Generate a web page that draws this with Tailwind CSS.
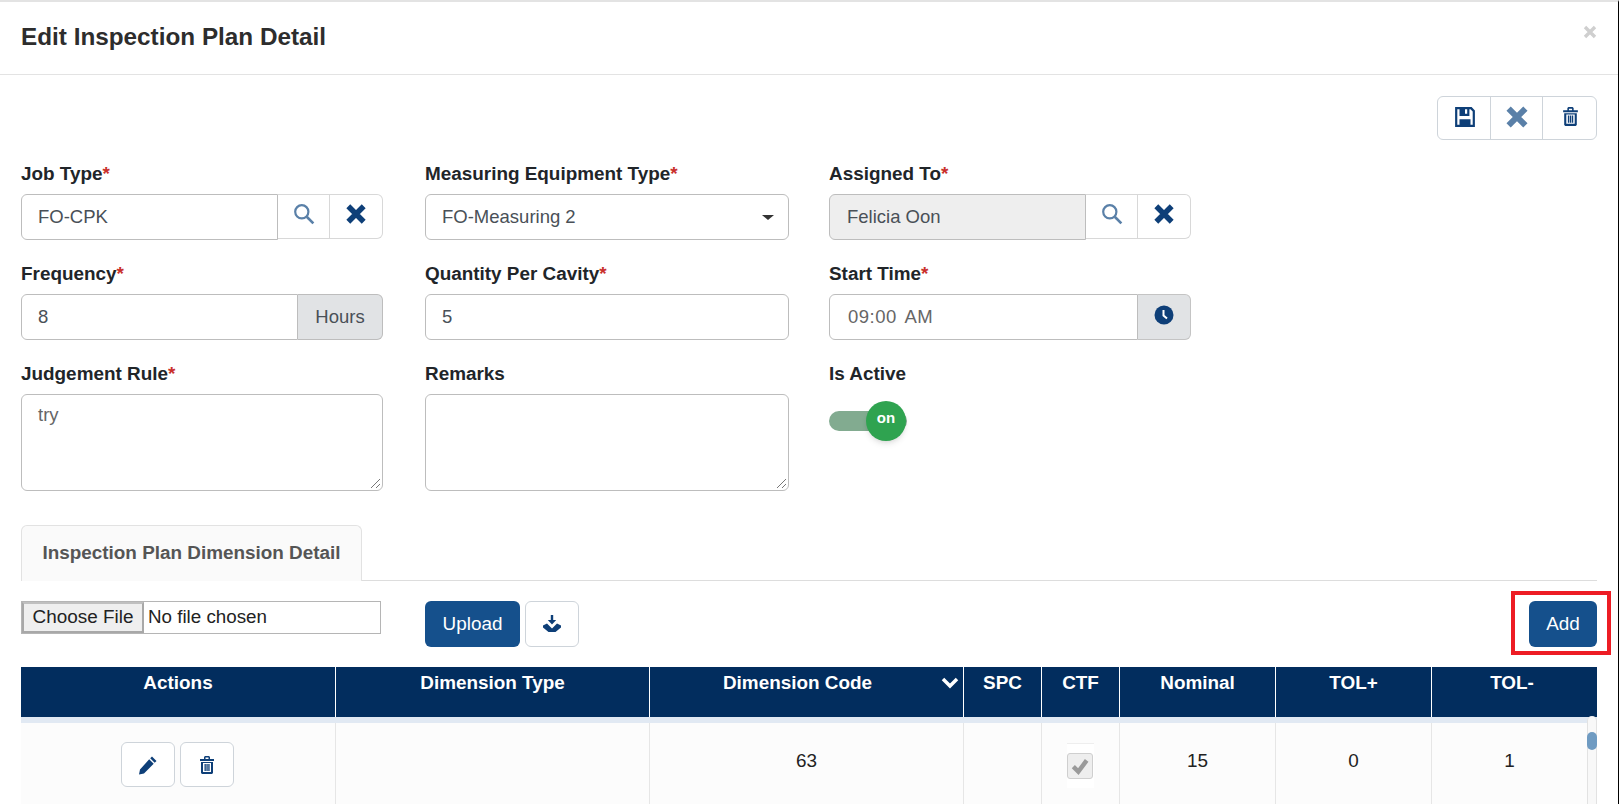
<!DOCTYPE html>
<html lang="en">
  <head>
    <meta charset="UTF-8" />
    <meta name="viewport" content="width=device-width, initial-scale=1.0" />
    <script src="https://cdn.jsdelivr.net/npm/@tailwindcss/browser@4"></script>
    <title>Edit Inspection Plan Detail</title>
  </head>
  <body class="bg-white">
    <div class="h-[804px] w-[1619px] overflow-hidden border-t-2 border-r border-t-[#e3e3e3] border-r-black font-['Liberation_Sans',Arial,sans-serif] text-[18.900px] text-[#212529]">
      <!-- Modal header -->
      <div class="h-[73px] flex items-center justify-between pl-[21px] pr-[21px] border-b border-[#e3e3e3]">
        <h1 class="mb-[2px] text-[24.300px] font-bold text-[#2d2d2d]">Edit Inspection Plan Detail</h1>
        <svg class="mb-[12px] w-[14px] h-[14px]" viewBox="0 0 14 14"><path d="M2 2l10 10M12 2L2 12" stroke="#cfcfcf" stroke-width="3.4"/></svg>
      </div>

      <!-- Toolbar -->
      <div class="flex justify-end pr-[21px] pt-[21px]">
        <div class="flex h-[44px] border border-[#ced4da] rounded-md">
          <button class="w-[53px] pl-[2px] flex items-center justify-center border-r border-[#ced4da]">
            <svg class="mb-[3px] w-[22px] h-[22px]" viewBox="0 0 20 20"><path fill-rule="evenodd" fill="#0e3f78" d="M1 1h15l3 3v15H1zM3 3v14h14V5l-2-2h-1v6H5V3zM10 3v4h2V3zM5 12h10v5H5z"/></svg>
          </button>
          <button class="w-[52px] pl-[1px] flex items-center justify-center border-r border-[#ced4da]">
            <svg class="mb-[3px] w-[24px] h-[24px]" viewBox="0 0 20 20"><path d="M3 3l14 14M17 3L3 17" stroke="#5a80a8" stroke-width="5"/></svg>
          </button>
          <button class="w-[53px] pl-[1px] flex items-center justify-center">
            <svg class="mb-[3px] w-[17px] h-[21px]" viewBox="0 0 16 20"><path fill="#0e3f78" fill-rule="evenodd" d="M1 4h14v2H1zM5 4V2l1-1h4l1 1v2H9.500V2.500h-3V4zM2 7h12v11l-1 1H3l-1-1zM4 8v9h8V8zM5.500 9h1.300v7H5.500zM7.400 9h1.300v7H7.400zM9.300 9h1.300v7H9.300z"/></svg>
          </button>
        </div>
      </div>

      <!-- Form -->
      <div class="pl-[21px] mt-[22px] grid grid-cols-[362px_404px_362px] gap-x-0 w-[1170px]">
        <div class="h-[100px]">
          <label class="block h-[32px] font-bold leading-[24px]">Job Type<span class="text-[#c9302c]">*</span></label>
          <div class="flex h-[46px]">
            <div class="w-[257px] h-[46px] flex items-center pl-[16px] border border-[#bdbdbd] rounded-l-md text-[18.500px] text-[#495057]">FO-CPK</div>
            <div class="w-[105px] h-[45px] flex border border-l-0 border-[#d8d8d8] rounded-r-md">
              <div class="w-[52px] flex items-center justify-center border-r border-[#d8d8d8]">
                <svg class="mb-[6px] w-[22px] h-[22px]" viewBox="0 0 20 20"><circle cx="8" cy="8" r="6" fill="none" stroke="#5a80a8" stroke-width="2"/><path d="M12.500 12.500l6 6" stroke="#5a80a8" stroke-width="2.400"/></svg>
              </div>
              <div class="flex-1 flex items-center justify-center">
                <svg class="mb-[6px] w-[22px] h-[22px]" viewBox="0 0 20 20"><path d="M3 3l14 14M17 3L3 17" stroke="#0e3f78" stroke-width="5"/></svg>
              </div>
            </div>
          </div>
        </div>
        <div class="h-[100px] pl-[42px]">
          <label class="block h-[32px] font-bold leading-[24px]">Measuring Equipment Type<span class="text-[#c9302c]">*</span></label>
          <div class="w-[364px] h-[46px] flex items-center justify-between pl-[16px] pr-[14px] border border-[#bdbdbd] rounded-md text-[18.500px] text-[#495057]">
            FO-Measuring 2
            <span class="w-0 h-0 border-x-[6px] border-x-transparent border-t-[5px] border-t-[#333]"></span>
          </div>
        </div>
        <div class="h-[100px] pl-[42px]">
          <label class="block h-[32px] font-bold leading-[24px]">Assigned To<span class="text-[#c9302c]">*</span></label>
          <div class="flex h-[46px] w-[362px]">
            <div class="w-[257px] h-[46px] flex items-center pl-[17px] border border-[#bdbdbd] rounded-l-md bg-[#eeeeee] text-[18.500px] text-[#495057]">Felicia Oon</div>
            <div class="w-[105px] h-[45px] flex border border-l-0 border-[#d8d8d8] rounded-r-md">
              <div class="w-[52px] flex items-center justify-center border-r border-[#d8d8d8]">
                <svg class="mb-[6px] w-[22px] h-[22px]" viewBox="0 0 20 20"><circle cx="8" cy="8" r="6" fill="none" stroke="#5a80a8" stroke-width="2"/><path d="M12.500 12.500l6 6" stroke="#5a80a8" stroke-width="2.400"/></svg>
              </div>
              <div class="flex-1 flex items-center justify-center">
                <svg class="mb-[6px] w-[22px] h-[22px]" viewBox="0 0 20 20"><path d="M3 3l14 14M17 3L3 17" stroke="#0e3f78" stroke-width="5"/></svg>
              </div>
            </div>
          </div>
        </div>

        <div class="h-[100px]">
          <label class="block h-[32px] font-bold leading-[24px]">Frequency<span class="text-[#c9302c]">*</span></label>
          <div class="flex h-[46px]">
            <div class="w-[277px] flex items-center pl-[16px] border border-[#bdbdbd] rounded-l-md text-[18.500px] text-[#495057]">8</div>
            <div class="w-[85px] flex items-center justify-center border border-l-0 border-[#bdbdbd] rounded-r-md bg-[#e1e3e5] text-[18.500px] text-[#495057]">Hours</div>
          </div>
        </div>
        <div class="h-[100px] pl-[42px]">
          <label class="block h-[32px] font-bold leading-[24px]">Quantity Per Cavity<span class="text-[#c9302c]">*</span></label>
          <div class="w-[364px] h-[46px] flex items-center pl-[16px] border border-[#bdbdbd] rounded-md text-[18.500px] text-[#495057]">5</div>
        </div>
        <div class="h-[100px] pl-[42px]">
          <label class="block h-[32px] font-bold leading-[24px]">Start Time<span class="text-[#c9302c]">*</span></label>
          <div class="flex h-[46px] w-[362px]">
            <div class="w-[309px] flex items-center pl-[18px] border border-[#bdbdbd] rounded-l-md text-[18.500px] text-[#666] tracking-[0.5px] [word-spacing:3px]">09:00 AM</div>
            <div class="w-[53px] flex items-center justify-center border border-l-0 border-[#c4c4c4] rounded-r-md bg-[#e1e3e5]">
              <svg class="mb-[4px] w-[20px] h-[20px]" viewBox="0 0 20 20"><circle cx="10" cy="10" r="9.500" fill="#0e3f78"/><path d="M9.500 5v5.500l3.500 3" fill="none" stroke="#fff" stroke-width="2"/></svg>
            </div>
          </div>
        </div>

        <div>
          <label class="block h-[32px] font-bold leading-[24px]">Judgement Rule<span class="text-[#c9302c]">*</span></label>
          <div class="relative w-[362px] h-[97px] pl-[16px] pt-[6px] border border-[#bdbdbd] rounded-md text-[18.500px] text-[#666]">try
            <svg class="absolute right-[1px] bottom-[1px] w-[12px] h-[12px]" viewBox="0 0 12 12"><path d="M11 2L2 11M11 7l-4 4" stroke="#777" stroke-width="1"/></svg>
          </div>
        </div>
        <div class="pl-[42px]">
          <label class="block h-[32px] font-bold leading-[24px]">Remarks</label>
          <div class="relative w-[364px] h-[97px] border border-[#bdbdbd] rounded-md">
            <svg class="absolute right-[1px] bottom-[1px] w-[12px] h-[12px]" viewBox="0 0 12 12"><path d="M11 2L2 11M11 7l-4 4" stroke="#777" stroke-width="1"/></svg>
          </div>
        </div>
        <div class="pl-[42px]">
          <label class="block h-[32px] font-bold leading-[24px]">Is Active</label>
          <div class="relative mt-[17px] w-[78px] h-[20px] rounded-full bg-[#82ab90]">
            <div class="absolute left-[37px] top-[-10px] w-[40px] h-[40px] rounded-full bg-[#2fa350] shadow-md text-white text-[15px] font-bold text-center leading-[34px]">on</div>
          </div>
        </div>
      </div>

      <!-- Tab -->
      <div class="mr-[21px] ml-[21px] mt-[34px] h-[56px] border-b border-[#dddddd] flex">
        <div class="w-[341px] h-[56px] flex items-center justify-center border border-b-0 border-[#e2e2e2] rounded-t-md bg-[#fafafa] font-bold text-[#555]">Inspection Plan Dimension Detail</div>
      </div>

      <!-- Upload row -->
      <div class="relative pl-[21px] pr-[21px] pt-[20px] h-[86px] flex">
        <div class="w-[360px] h-[33px] flex items-center border border-[#b5b5b5] text-[#222]">
          <span class="h-full w-[122px] flex items-center justify-center bg-[#efefef] border-2 border-[#a8a8a8] border-t-[#c0c0c0]">Choose File</span>
          <span class="pl-[4px] text-[18.800px]">No file chosen</span>
        </div>
        <button class="ml-[44px] w-[95px] h-[46px] rounded-md bg-[#15508c] text-white">Upload</button>
        <button class="ml-[5px] w-[54px] h-[46px] rounded-md border border-[#ced4da] flex items-center justify-center">
          <svg class="w-[20px] h-[20px]" viewBox="0 0 20 20"><path fill="#0e3f78" d="M8.800 1h2.400v5h3L10 10.500 5.800 6h3zM1 11.500l4-2 5 5 5-5 4 2v2L13.500 18h-7L1 13.500z"/></svg>
        </button>
        <button class="ml-auto w-[68px] h-[46px] rounded-md bg-[#15508c] text-white">Add</button>
        <!-- red highlight round the Add button -->
        <div class="absolute right-[7px] top-[10px] w-[100px] h-[64px] border-[4px] border-[#ed1c24]"></div>
      </div>

      <!-- Table -->
      <div class="relative mr-[21px] ml-[21px]">
        <div class="grid grid-cols-[315px_314px_314px_78px_78px_156px_156px_165px] h-[50px] bg-[#022d5e] text-white font-bold text-center leading-[32px]">
          <div class="border-r border-white">Actions</div>
          <div class="border-r border-white">Dimension Type</div>
          <div class="relative border-r border-white pr-[18px]">Dimension Code
            <svg class="absolute right-[4px] top-[10px] w-[18px] h-[12px]" viewBox="0 0 18 12"><path d="M2 2l7 7 7-7" fill="none" stroke="#fff" stroke-width="3.500"/></svg>
          </div>
          <div class="border-r border-white">SPC</div>
          <div class="border-r border-white">CTF</div>
          <div class="border-r border-white">Nominal</div>
          <div class="border-r border-white">TOL+</div>
          <div class="pr-[5px]">TOL-</div>
        </div>
        <div class="h-[6px] bg-[#e1e9f3]"></div>
        <div class="grid grid-cols-[315px_314px_314px_78px_78px_156px_156px_165px] h-[90px] bg-[#fcfcfc] text-center text-[#222]">
          <div class="border-r border-[#e6e6e6] flex justify-center gap-[5px] pt-[19px] pr-[2px]">
            <button class="w-[54px] h-[45px] rounded-md border border-[#ced4da] bg-white flex items-center justify-center">
              <svg class="w-[20px] h-[20px]" viewBox="0 0 20 20"><path fill="#0e3f78" d="M14 1.500l4.500 4.500-1.800 1.800-4.500-4.500zM11.200 4.300l4.500 4.500L6 18.500l-5 1 1-5z"/></svg>
            </button>
            <button class="w-[54px] h-[45px] rounded-md border border-[#ced4da] bg-white flex items-center justify-center">
              <svg class="w-[16px] h-[20px]" viewBox="0 0 16 20"><path fill="#0e3f78" fill-rule="evenodd" d="M1 4h14v2H1zM5 4V2l1-1h4l1 1v2H9.500V2.500h-3V4zM2 7h12v11l-1 1H3l-1-1zM4 8v9h8V8zM5.500 9h1.300v7H5.500zM7.400 9h1.300v7H7.400zM9.300 9h1.300v7H9.300z"/></svg>
            </button>
          </div>
          <div class="border-r border-[#e6e6e6]"></div>
          <div class="border-r border-[#e6e6e6] pt-[24px]">63</div>
          <div class="border-r border-[#e6e6e6]"></div>
          <div class="border-r border-[#e6e6e6] flex justify-center pt-[20px]">
            <div class="w-[27px] h-[45px] pt-[9px] bg-white border-t border-[#eeeeee]">
              <span class="w-[26px] h-[26px] rounded-[3px] border border-[#cfcfcf] bg-[#eeeeee] flex items-center justify-center">
                <svg class="w-[20px] h-[20px]" viewBox="0 0 18 18"><path d="M3 9.500l4.500 4.500L15 4" fill="none" stroke="#9a9a9a" stroke-width="4"/></svg>
              </span>
            </div>
          </div>
          <div class="border-r border-[#e6e6e6] pt-[24px]">15</div>
          <div class="border-r border-[#e6e6e6] pt-[24px]">0</div>
          <div class="pt-[24px] pr-[10px]">1</div>
        </div>
        <!-- scrollbar sits over the last column -->
        <div class="absolute right-0 top-[49px] w-[10px] h-[91px] bg-[#f8f8f8] border-x border-[#e2e2e2] rounded-t-full">
          <div class="mt-[16px] w-[10px] -ml-px h-[18px] rounded-full bg-[#6f9bc2]"></div>
        </div>
      </div>
    </div>
  </body>
</html>
